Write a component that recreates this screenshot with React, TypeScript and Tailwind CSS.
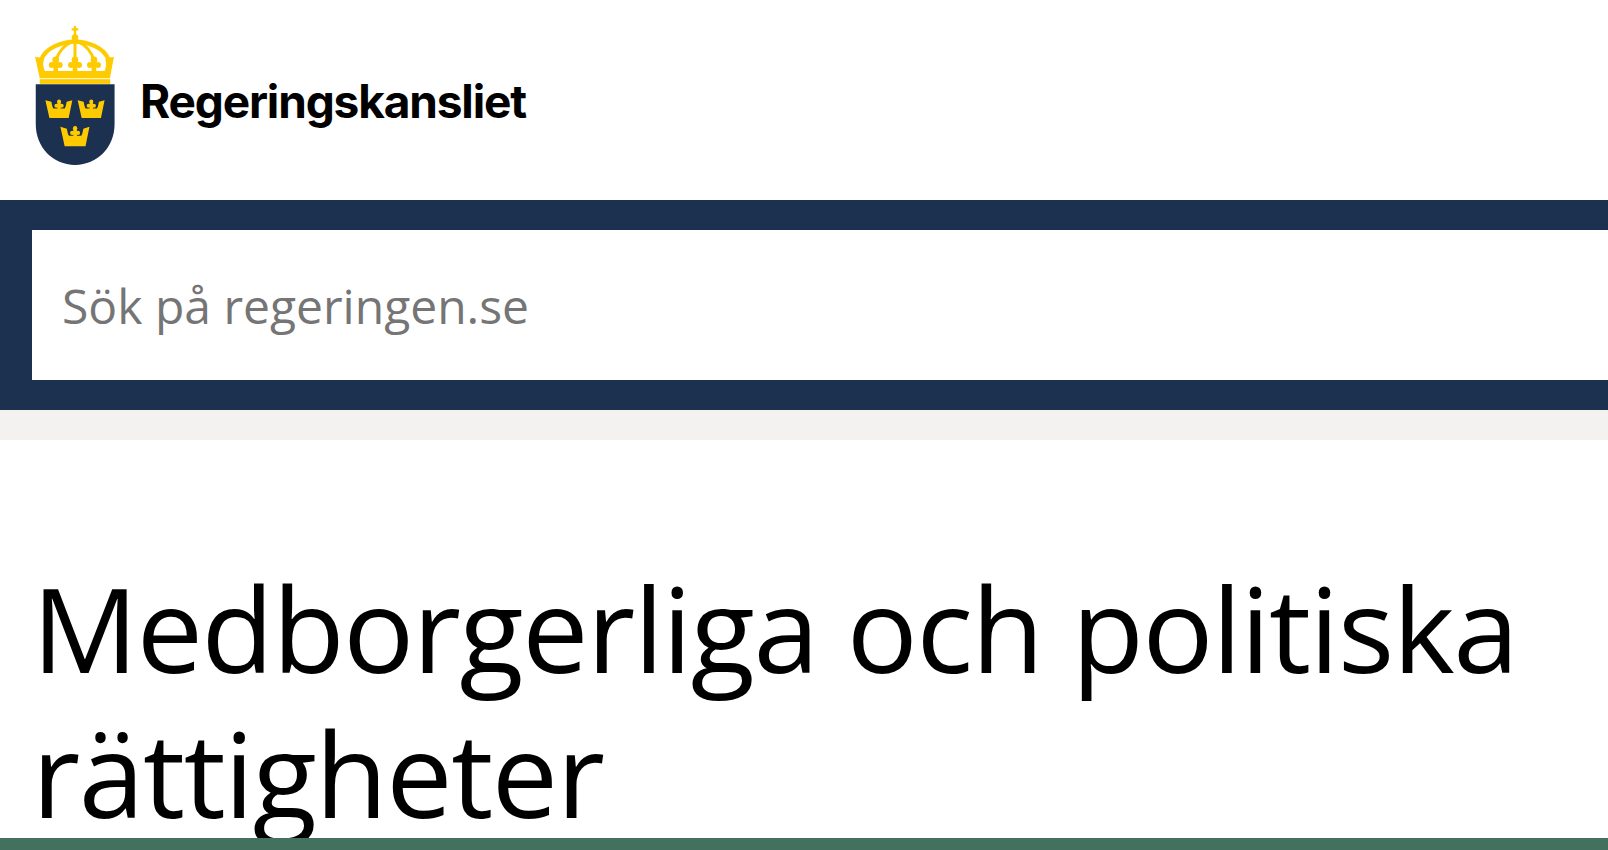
const navy = "#1c304f";
const gold = "#fecb00";

const SmallCrown = ({ x, y, s = 1 }: { x: number; y: number; s?: number }) => (
  <g transform={`translate(${x} ${y}) scale(${s})`} fill={gold}>
    <path d="M0 3 L18 8 C20 14 19 20 24 28 L58 28 C63 20 62 14 64 8 L81 3 L70 57 L12 57 Z" />
    <circle cx="41" cy="7" r="6" />
    <circle cx="33" cy="20" r="6" />
    <circle cx="49" cy="20" r="6" />
    <rect x="36" y="7" width="10" height="24" />
  </g>
);

const Fleuron = ({ x }: { x: number }) => (
  <g fill={gold}>
    <circle cx={x} cy="117" r="10" />
    <circle cx={x - 12} cy="132" r="9" />
    <circle cx={x + 12} cy="132" r="9" />
    <rect x={x - 7} y="118" width="14" height="36" />
  </g>
);

const Logo = () => (
  <svg viewBox="40 42 246 424" className="w-[82px] h-[141px] shrink-0">
    <g transform="translate(30 30)">
      <path d="M133 15 V42 M123 25 H143" stroke={gold} strokeWidth="7" fill="none" />
      <circle cx="133" cy="50" r="10" fill={gold} />
      <path d="M32 116 C44 80 95 62 133 62 C171 62 222 80 233 116" stroke={gold} strokeWidth="13" fill="none" />
      <path d="M133 60 V120 M124 63 C100 72 82 95 76 118 M142 63 C166 72 184 95 190 118" stroke={gold} strokeWidth="9" fill="none" />
      <path d="M13 108 C25 108 35 110 40 116 C36 125 36 135 42 150 L222 150 C228 135 228 125 224 116 C229 110 240 108 250 108 L238 172 L27 172 Z" fill={gold} />
      <Fleuron x={75} />
      <Fleuron x={133} />
      <Fleuron x={190} />
      <rect x="27" y="175" width="212" height="14" fill={gold} />
    </g>
    <path d="M45 220 H282 V340 C282 410 230 463 163 463 C96 463 45 410 45 340 Z" fill={navy} />
    <SmallCrown x={74} y={265} />
    <SmallCrown x={171} y={265} />
    <SmallCrown x={119} y={345} s={1.08} />
  </svg>
);

export default function App() {
  return (
    <div className="h-[850px] overflow-hidden bg-white font-['Open_Sans',sans-serif]">
      <header className="flex h-[200px] items-start gap-[24px] pl-[34px] pt-[25px]">
        <Logo />
        <span className="mt-[46px] font-['Inter',sans-serif] text-[46px] font-bold leading-[60px] tracking-[-1.15px] text-black">
          Regeringskansliet
        </span>
      </header>
      <div className="bg-[#1c304f] py-[30px] pl-[32px]">
        <input
          readOnly
          placeholder="Sök på regeringen.se"
          className="block h-[150px] w-full bg-white pl-[30px] text-[48px] font-normal outline-none placeholder:text-[#757575]"
        />
      </div>
      <div className="h-[30px] bg-[#f3f2f0]" />
      <h1 className="mt-[115px] pl-[32px] text-[118px] font-normal leading-[145px] tracking-[-1.4px] text-black">
        Medborgerliga och politiska rättigheter
      </h1>
      <div className="fixed inset-x-0 bottom-0 h-[12px] bg-[#44705f]" />
    </div>
  );
}
